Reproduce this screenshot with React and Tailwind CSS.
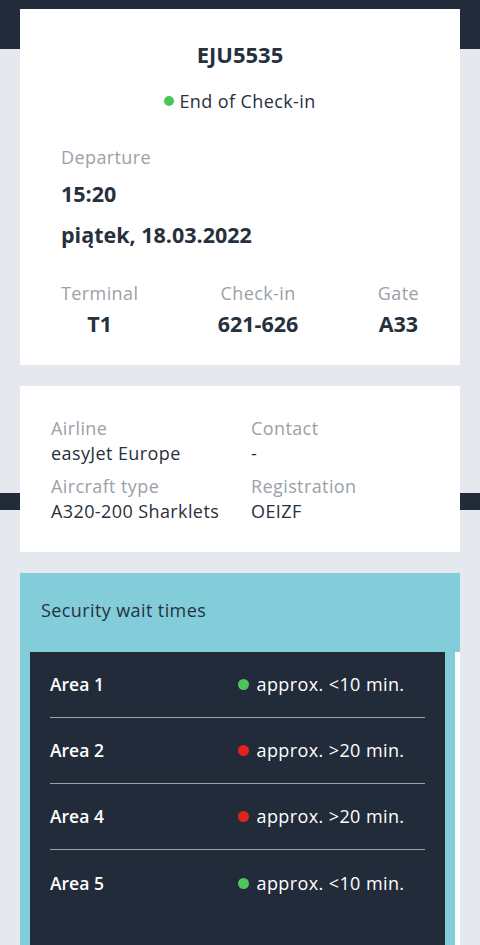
import React from "react";

const rows = [
  { area: "Area 1", ok: true, text: "approx. <10 min." },
  { area: "Area 2", ok: false, text: "approx. >20 min." },
  { area: "Area 4", ok: false, text: "approx. >20 min." },
  { area: "Area 5", ok: true, text: "approx. <10 min." },
];

export default function App() {
  return (
    <div className="min-h-screen bg-[#e5e9ed] font-['Open_Sans','Liberation_Sans',sans-serif] text-[#27303d] overflow-hidden">
      {/* Card 1 over dark header */}
      <div className="bg-[linear-gradient(to_bottom,#222b3a_49px,transparent_49px)] px-5 pt-[9px]">
        <div className="bg-white px-[41px] pt-[31px] pb-[27px]">
          <div className="text-center text-[22px] leading-[28px] font-bold">EJU5535</div>
          <div className="mt-[21px] flex items-center justify-center gap-[5px] text-[18px] leading-[24px] tracking-[0.4px]">
            <span className="w-[10px] h-[10px] rounded-full bg-[#4cc55a]"></span>
            <span>End of Check-in</span>
          </div>
          <div className="mt-[32px] text-[18px] leading-[24px] tracking-[0.4px] text-[#9ba1a7]">Departure</div>
          <div className="mt-[11px] text-[21.5px] leading-[28px] font-bold">15:20</div>
          <div className="mt-[13px] text-[21.5px] leading-[28px] font-bold">piątek, 18.03.2022</div>
          <div className="mt-[32px] flex justify-between">
            {[
              ["Terminal", "T1"],
              ["Check-in", "621-626"],
              ["Gate", "A33"],
            ].map(([l, v]) => (
              <div key={l} className="flex flex-col items-center">
                <div className="text-[18px] leading-[24px] tracking-[0.4px] text-[#9ba1a7]">{l}</div>
                <div className="mt-[5px] text-[21.5px] leading-[28px] font-bold">{v}</div>
              </div>
            ))}
          </div>
        </div>
      </div>

      {/* Card 2 */}
      <div className="mt-[21px] px-5 bg-[linear-gradient(to_bottom,transparent_107px,#222b3a_107px,#222b3a_124px,transparent_124px)]">
        <div className="bg-white pl-[31px] pt-[30px] pb-[29px] grid grid-cols-[200px_1fr] gap-y-[9px] text-[18px] leading-[24px] tracking-[0.4px]">
          <div>
            <div className="text-[#9ba1a7]">Airline</div>
            <div className="mt-[1px]">easyJet Europe</div>
          </div>
          <div>
            <div className="text-[#9ba1a7]">Contact</div>
            <div className="mt-[1px]">-</div>
          </div>
          <div>
            <div className="text-[#9ba1a7]">Aircraft type</div>
            <div className="mt-[1px]">A320-200 Sharklets</div>
          </div>
          <div>
            <div className="text-[#9ba1a7]">Registration</div>
            <div className="mt-[1px]">OEIZF</div>
          </div>
        </div>
      </div>

      {/* Security wait times */}
      <div className="mt-[21px] px-5">
        <div className="bg-[#83cddb] overflow-hidden pt-[25px]">
          <div className="pl-[21px] text-[18px] leading-[24px] tracking-[0.4px] text-[#26323e]">Security wait times</div>
          <div className="mt-[30px] pl-[10px] flex gap-[10px]">
            <div className="shrink-0 w-[415px] h-[320px] bg-[#222b3a] px-5">
              {rows.map((r, i) => (
                <div
                  key={r.area}
                  className={`grid grid-cols-2 items-center h-[66px] ${i < rows.length - 1 ? "border-b border-[#9ca2a9]" : ""}`}
                >
                  <div className="text-[17.5px] font-semibold text-white">{r.area}</div>
                  <div className="flex items-center gap-[8px] text-[18px] tracking-[0.4px] text-white">
                    <span className={`w-[11px] h-[11px] rounded-full ${r.ok ? "bg-[#4cc55a]" : "bg-[#e0241b]"}`}></span>
                    <span>{r.text}</span>
                  </div>
                </div>
              ))}
            </div>
            <div className="shrink-0 w-[415px] h-[320px] bg-white"></div>
          </div>
        </div>
      </div>
    </div>
  );
}
